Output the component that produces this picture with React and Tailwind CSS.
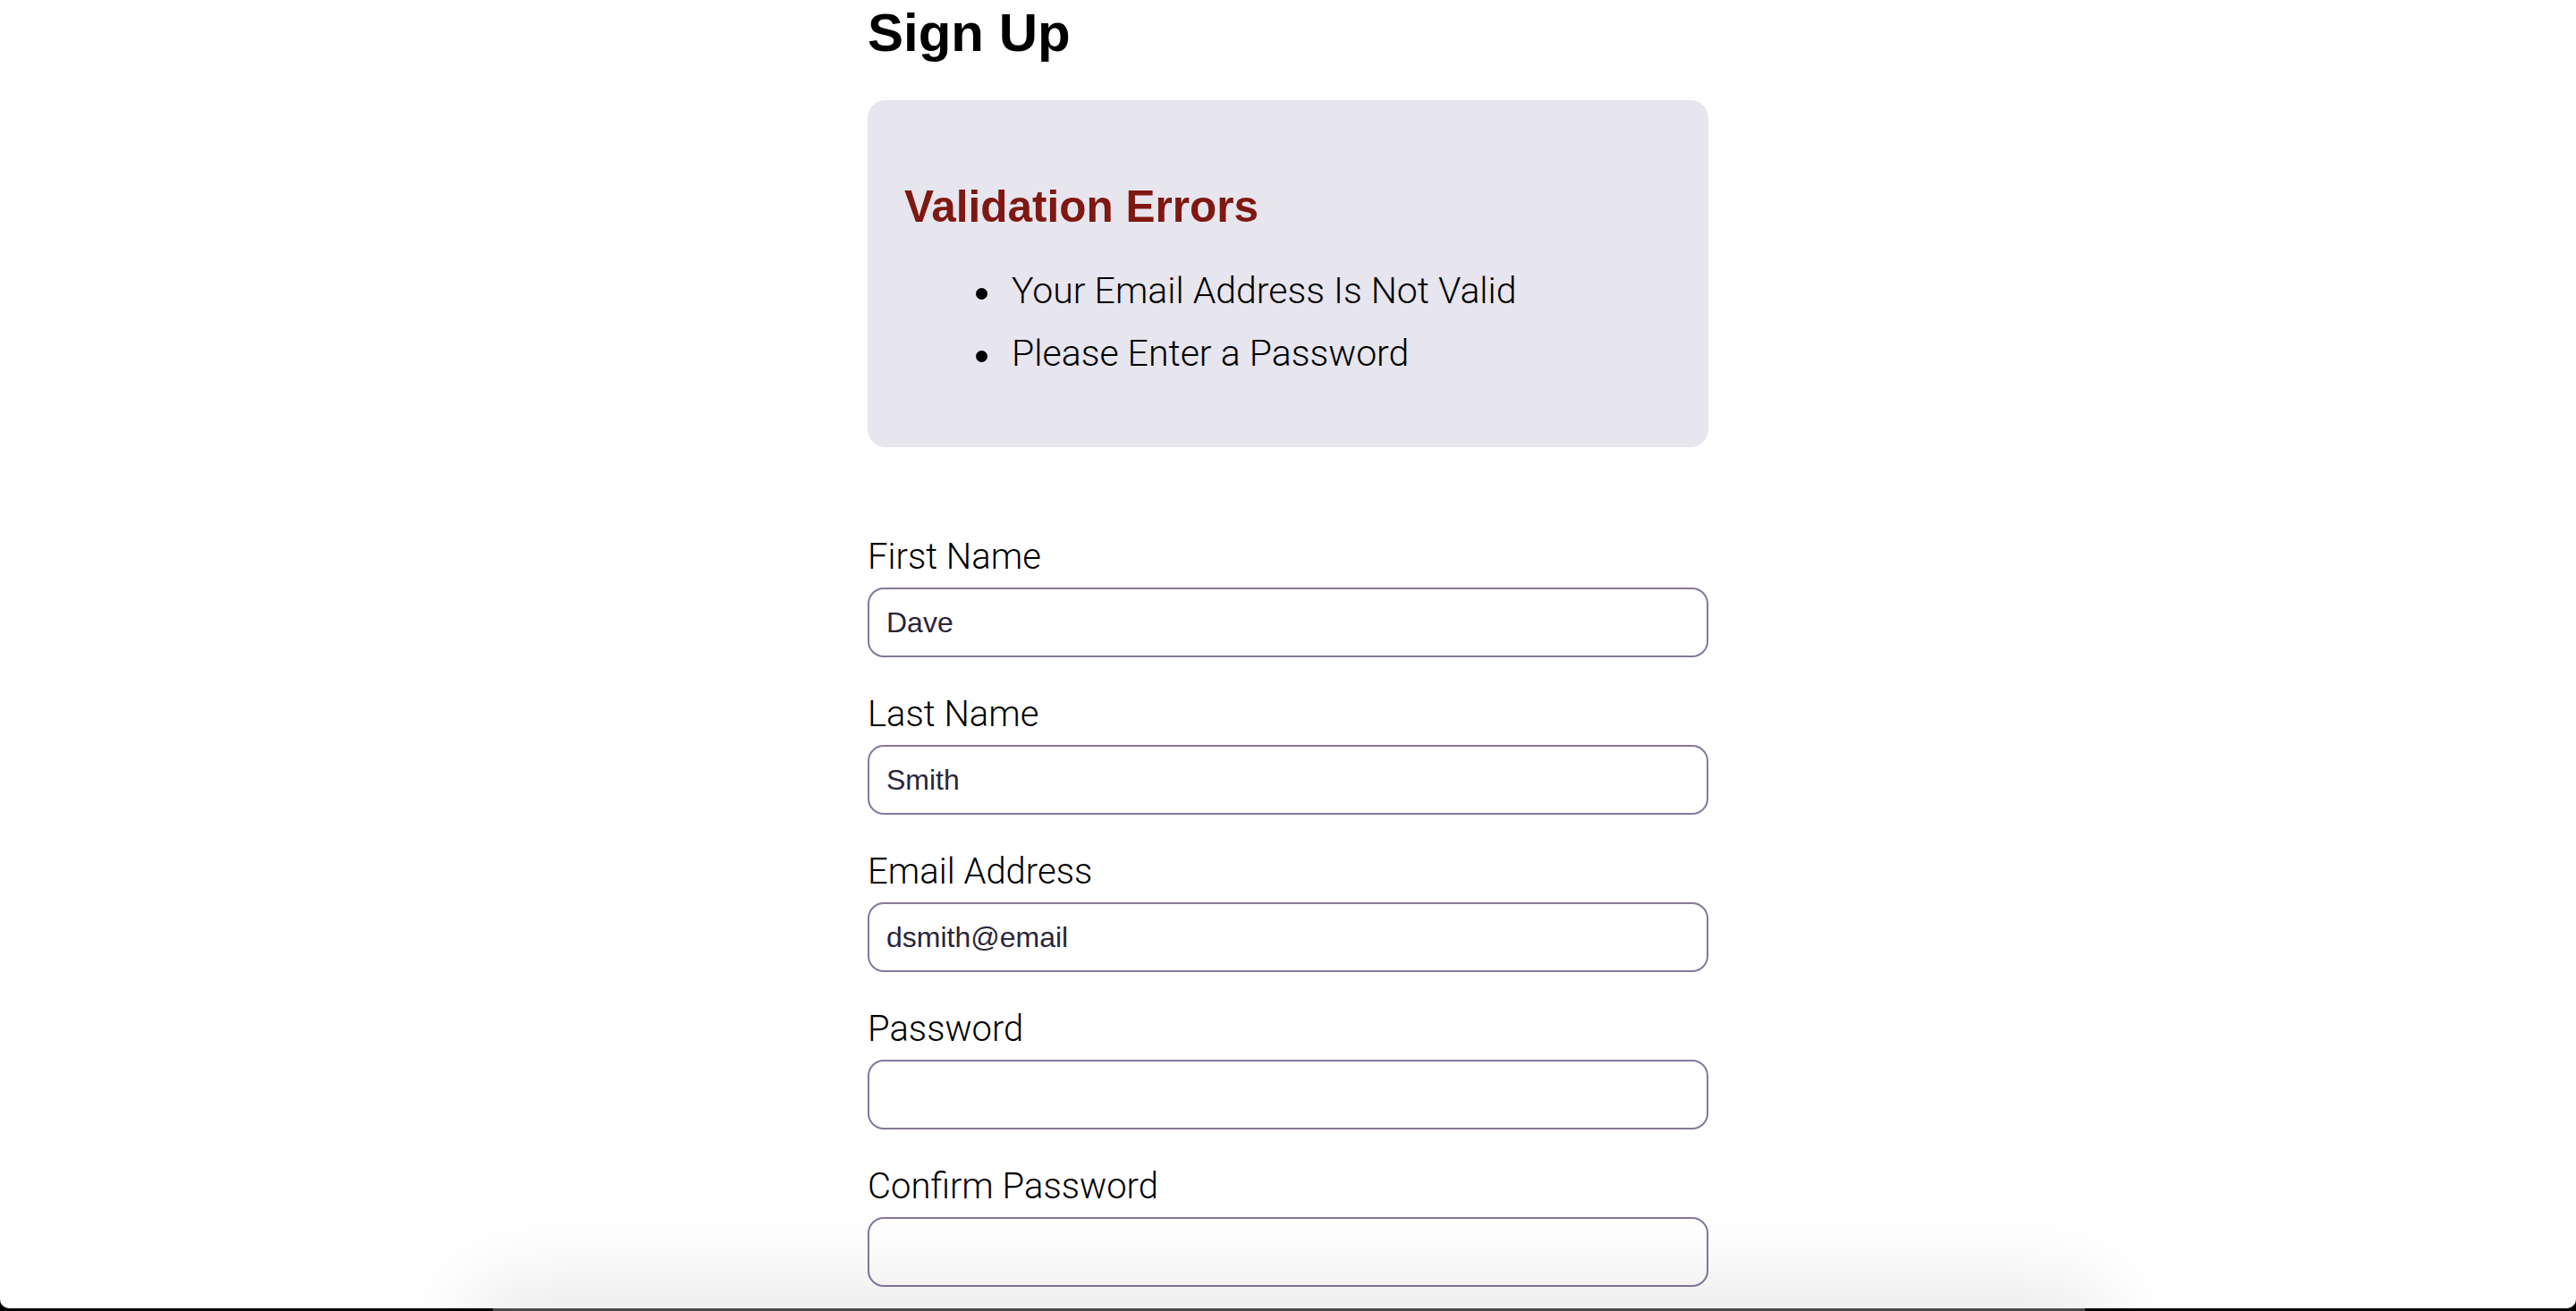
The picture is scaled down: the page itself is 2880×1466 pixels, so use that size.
import React from "react";

const fields = [
  { label: "First Name", value: "Dave" },
  { label: "Last Name", value: "Smith" },
  { label: "Email Address", value: "dsmith@email" },
  { label: "Password", value: "" },
  { label: "Confirm Password", value: "" },
];

export default function App() {
  return (
    <div className="w-full h-[1466px] overflow-hidden bg-black">
      <div className="relative h-[1463px] bg-white rounded-b-[10px] overflow-hidden">
        <div className="mx-auto w-[940px] pt-[7px]">
          <h1 className="text-[60px] leading-[60px] font-bold text-black [font-family:'Liberation_Sans',Arial,sans-serif]">
            Sign Up
          </h1>

          <div className="mt-[45px] rounded-[20px] bg-[#e7e5ee] pt-[95px] pb-[70px] pl-[41px]">
            <h2 className="text-[49.5px] leading-[48px] font-bold text-[#7e1811] [font-family:'Liberation_Sans',Arial,sans-serif]">
              Validation Errors
            </h2>
            <ul className="mt-[35px] [font-family:Roboto,'Liberation_Sans',sans-serif] font-light text-[41px] text-black">
              {["Your Email Address Is Not Valid", "Please Enter a Password"].map((t) => (
                <li key={t} className="flex items-center h-[70px] leading-[70px]">
                  <span className="ml-[80px] mt-[6px] w-[13px] h-[13px] rounded-full bg-black shrink-0" />
                  <span className="ml-[27px]">{t}</span>
                </li>
              ))}
            </ul>
          </div>

          <form className="mt-[97px] flex flex-col gap-[38px]">
            {fields.map((f) => (
              <div key={f.label} className="flex flex-col gap-[10px]">
                <label className="block pt-[2px] text-[40px] leading-[48px] font-light text-black [font-family:Roboto,'Liberation_Sans',sans-serif]">
                  {f.label}
                </label>
                <input
                  readOnly
                  value={f.value}
                  className="block w-full h-[78px] border-2 border-[#86789a] rounded-[18px] bg-transparent pl-[19px] text-[32px] text-[#2b2538] outline-none [font-family:'Liberation_Sans',Arial,sans-serif]"
                />
              </div>
            ))}
          </form>
        </div>

        <div className="pointer-events-none absolute left-[551px] w-[1780px] top-[1463px] h-[60px] rounded-[20px] bg-[#4a4a4a] shadow-[0_0_90px_30px_rgba(0,0,0,0.085)]" />
      </div>
      <div className="h-[3px] flex">
        <div className="w-[551px] bg-black" />
        <div className="w-[1780px] bg-[#4a4a4a]" />
        <div className="flex-1 bg-black" />
      </div>
    </div>
  );
}
